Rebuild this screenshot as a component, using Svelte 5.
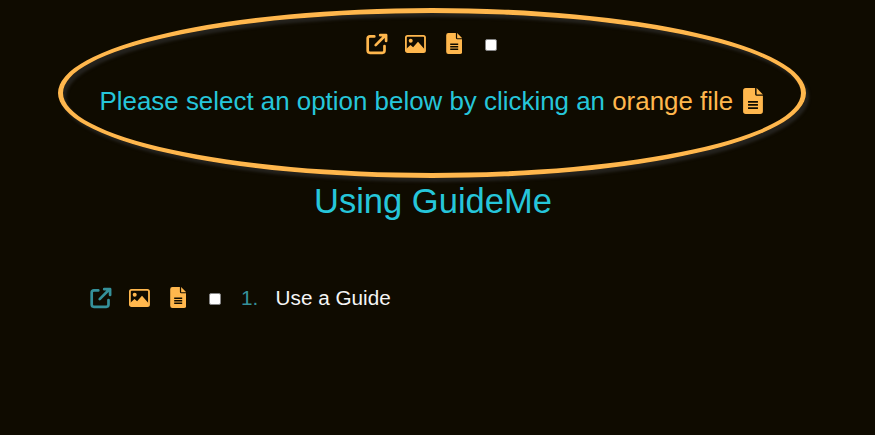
<script>
  const guides = [{ number: 1, title: 'Use a Guide' }];
</script>

{#snippet external()}
  <svg class="icon" viewBox="0 0 22 22" aria-hidden="true">
    <g fill="none" stroke="currentColor" stroke-width="2.7" stroke-linecap="round" stroke-linejoin="round">
      <path d="M8.3 3.4H3.9Q1.7 3.4 1.7 5.6V17.6Q1.7 19.8 3.9 19.8H16.3Q18.5 19.8 18.5 17.6V13" />
      <path d="M9.7 12.1L19.5 2.3M14.2 2.2H20.1V8" />
    </g>
  </svg>
{/snippet}

{#snippet image()}
  <svg class="icon" viewBox="0 0 22 22" aria-hidden="true">
    <rect x="1.9" y="2.8" width="19.1" height="16.4" rx="1.6" fill="none" stroke="currentColor" stroke-width="1.8" />
    <circle cx="6.7" cy="7.7" r="2" fill="currentColor" />
    <path d="M2.1 19V16L6.5 11.9L9.1 14.3L14 8.8L20.8 16.6V19Z" fill="currentColor" />
  </svg>
{/snippet}

{#snippet file()}
  <svg class="file" viewBox="0 0 16 21" aria-hidden="true">
    <path
      fill="currentColor"
      fill-rule="evenodd"
      d="M2.2 0H9.7V5.1Q9.7 6.2 10.8 6.2H16V18.8Q16 21 13.8 21H2.2Q0 21 0 18.8V2.2Q0 0 2.2 0ZM4 10.5V11.9H12V10.5ZM4 13V14.4H12V13ZM4 15.5V16.9H12V15.5Z"
    />
    <path fill="currentColor" d="M10.9 0L16 5.2H10.9Z" />
  </svg>
{/snippet}

{#snippet actions(muted)}
  <div class="actions">
    <span class:muted>{@render external()}</span>
    <span>{@render image()}</span>
    <span class="doc">{@render file()}</span>
    <i class="box"></i>
  </div>
{/snippet}

<main>
  <section class="prompt">
    {@render actions(false)}
    <p>Please select an option below by clicking an <b>orange file</b><span class="large">{@render file()}</span></p>
  </section>
  <h1>Using GuideMe</h1>
  {#each guides as guide}
    <div class="guide">
      {@render actions(true)}
      <span class="number">{guide.number}.</span>
      <span class="title">{guide.title}</span>
    </div>
  {/each}
</main>

<style>
  :global(body) { background: #0f0b00; }
  main {
    box-sizing: border-box;
    height: 435px;
    padding-top: 8px;
    overflow: hidden;
    font-family: "Liberation Sans", Arial, sans-serif;
    color: #26c6da;
  }
  .prompt {
    box-sizing: border-box;
    width: 748px;
    height: 170px;
    margin-left: 58px;
    padding-top: 20px;
    border: 5px solid #ffb74d;
    border-radius: 50%;
    box-shadow: 3px 4px 3px #24221d, inset 3px 4px 3px #24221d;
  }
  .actions {
    display: flex;
    align-items: center;
    width: 132px;
    height: 22px;
    color: #ffb74d;
  }
  .prompt .actions { margin-left: 303px; }
  .actions span { display: block; width: 22px; height: 22px; margin-right: 16px; }
  .actions .doc { width: 16.4px; height: 21px; margin: 0 23px 1px 3.6px; }
  .actions .muted { color: #35919a; }
  .icon { display: block; width: 22px; height: 22px; }
  .file { display: block; width: 100%; height: 100%; }
  .box {
    box-sizing: border-box;
    width: 12px;
    height: 12px;
    margin-top: 1px;
    border: 1px solid #858585;
    border-radius: 2px;
    background: #fff;
  }
  p {
    display: flex;
    align-items: center;
    height: 30px;
    margin: 31px 0 0 36.5px;
    font-size: 25.92px;
    line-height: 30px;
    white-space: pre;
  }
  b { font-weight: 400; color: #ffb74d; }
  .large { width: 20px; height: 26px; margin-left: 10px; color: #ffb74d; }
  h1 {
    width: 866px;
    margin: 3px 0 0;
    font-size: 34.56px;
    font-weight: 400;
    line-height: 40px;
    text-align: center;
  }
  .guide {
    display: flex;
    align-items: center;
    height: 24px;
    margin: 65px 0 0 90px;
    font-size: 20.736px;
    line-height: 24px;
  }
  .number { width: 34.6px; margin-left: 19px; color: #35919a; }
  .title { color: #f5f5f5; }
</style>
